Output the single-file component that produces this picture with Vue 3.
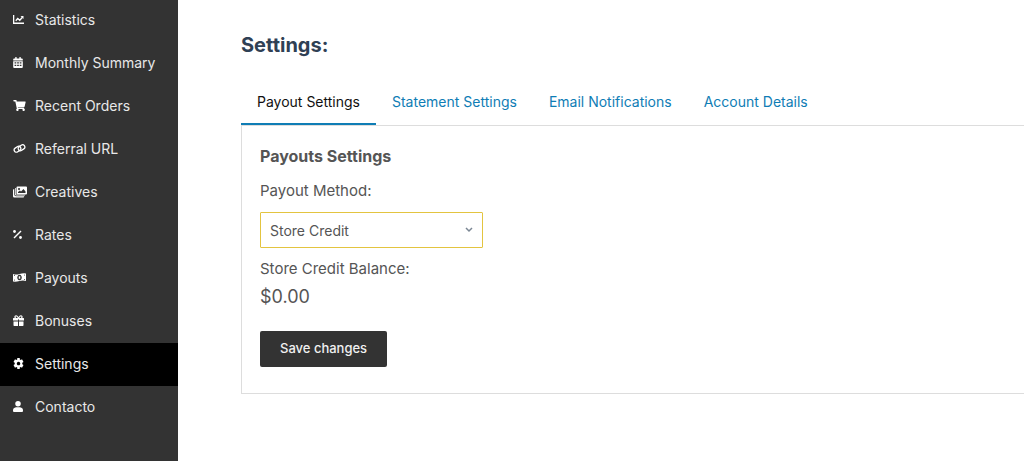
<script setup>
import { ref } from 'vue'

const menu = [
  { label: 'Statistics', icon: 'chart' },
  { label: 'Monthly Summary', icon: 'calendar' },
  { label: 'Recent Orders', icon: 'cart' },
  { label: 'Referral URL', icon: 'link' },
  { label: 'Creatives', icon: 'images' },
  { label: 'Rates', icon: 'percent' },
  { label: 'Payouts', icon: 'money' },
  { label: 'Bonuses', icon: 'gift' },
  { label: 'Settings', icon: 'cog' },
  { label: 'Contacto', icon: 'user' }
]
const tabs = ['Payout Settings', 'Statement Settings', 'Email Notifications', 'Account Details']
const method = ref('Store Credit')
</script>

<template>
  <div class="layout">
    <nav class="sidebar" aria-label="Affiliate area">
      <a v-for="item in menu" :key="item.label" href="#" class="item" :class="{ active: item.label === 'Settings' }">
        <svg v-if="item.icon === 'chart'" class="icon" viewBox="0 0 22 22" width="11" height="11"><path fill="none" stroke="currentColor" stroke-width="2.600" d="M1.300 2v16.500H22M5.500 13.500l4-4.500 4 3.500L19 6.500" /><path d="M15 4h6v6z" /></svg>
        <svg v-else-if="item.icon === 'calendar'" class="icon" viewBox="0 0 448 512" width="10" height="11"><path fill-rule="evenodd" d="M112 0h32q16 0 16 16v48h128V16q0-16 16-16h32q16 0 16 16v48h48q48 0 48 48v48H0v-48q0-48 48-48h48V16q0-16 16-16zM0 192h448v272q0 48-48 48H48q-48 0-48-48zM64 240v60h80v-60zM184 240v60h80v-60zM304 240v60h80v-60zM64 360v60h80v-60zM184 360v60h80v-60zM304 360v60h80v-60z" /></svg>
        <svg v-else-if="item.icon === 'cart'" class="icon" viewBox="0 0 576 512" width="13" height="11"><path d="M528 301l47-208c4-15-8-29-23-29H159l-9-45C148 8 138 0 126 0H24C11 0 0 11 0 24v16c0 13 11 24 24 24h70l70 343a56 56 0 1 0 67 9h210a56 56 0 1 0 64-10l5-25c4-15-8-29-23-29H218l-7-32h294c11 0 21-8 23-19z" /></svg>
        <svg v-else-if="item.icon === 'link'" class="icon" viewBox="0 0 26 22" width="13" height="11"><g fill="none" stroke="currentColor" stroke-width="2.600"><rect x="2" y="8" width="14" height="9" rx="4.500" transform="rotate(-35 9 12.500)" /><rect x="10" y="5" width="14" height="9" rx="4.500" transform="rotate(-35 17 9.500)" /></g></svg>
        <svg v-else-if="item.icon === 'images'" class="icon" viewBox="0 0 28 24" width="14" height="12"><path d="M2.500 6Q0 6 0 8.500v12Q0 23 2.500 23H20q2.500 0 2.500-2.500H6q-3.500 0-3.500-3.500z" /><path d="M4 4v12.500Q4 19 6.500 19H24v-1.500H8q-2.500 0-2.500-2.500V4z" /><path fill-rule="evenodd" d="M9 1h17q2 0 2 2v12q0 2-2 2H9q-2 0-2-2V3q0-2 2-2zM10 14h15v-3l-4-5-5 5-2-2-4 3zM12 4a2 2 0 1 0 .1 0z" /></svg>
        <svg v-else-if="item.icon === 'percent'" class="icon" viewBox="0 0 18 22" width="9" height="11"><circle cx="3" cy="5" r="2.800" /><circle cx="15" cy="17" r="2.800" /><path d="M15 3l2 2L3 19l-2-2z" /></svg>
        <svg v-else-if="item.icon === 'money'" class="icon" viewBox="0 0 26 22" width="13" height="11"><path fill-rule="evenodd" d="M0 4q6 2 13 0T26 3v15q-6-2-13 0T0 19zM13 5.500a4.500 5.500 0 1 0 .1 0z" /><rect x="11.500" y="8.500" width="3" height="5" /><g fill="#333"><circle cx="3" cy="7" r="1" /><circle cx="23" cy="15" r="1" /><circle cx="3" cy="16" r="1" /><circle cx="23" cy="6" r="1" /></g></svg>
        <svg v-else-if="item.icon === 'gift'" class="icon" viewBox="0 0 22 22" width="11" height="11"><path d="M1 6h20q1 0 1 1v4H12V6h-2v5H0V7q0-1 1-1zM1 13h9v9H2.500Q1 22 1 20.500zM12 13h9v7.500q0 1.500-1.500 1.500H12z" /><path fill="none" stroke="currentColor" stroke-width="2.200" d="M11 7C9 2 7 1 5 2S4 6 6 7h10c2-1 3-4 1-5s-4 0-6 5z" /></svg>
        <svg v-else-if="item.icon === 'cog'" class="icon" viewBox="0 0 22 22" width="11" height="11"><path fill-rule="evenodd" d="M8.500 0h5v3l2 1L18 2.500 21 8l-2.500 1.500v3L21 14l-3 5.500L15.500 18l-2 1v3h-5v-3l-2-1L4 19.500 1 14l2.500-1.500v-3L1 8l3-5.500L6.500 4l2-1zM11 7.500a3.500 3.500 0 1 0 .1 0z" /></svg>
        <svg v-else class="icon" viewBox="0 0 20 22" width="10" height="11"><circle cx="10" cy="5.500" r="5.500" /><path d="M6 12.500h8q6 1 6 6.500v1q0 2-2 2H2q-2 0-2-2v-1q0-5.500 6-6.500z" /></svg>
        <span>{{ item.label }}</span>
      </a>
    </nav>

    <main class="content">
      <h1>Settings:</h1>
      <div class="tabs">
        <a v-for="(tab, i) in tabs" :key="tab" href="#" class="tab" :class="{ selected: i === 0 }">{{ tab }}</a>
      </div>
      <form class="panel" @submit.prevent>
        <h2>Payouts Settings</h2>
        <label for="method">Payout Method:</label>
        <div class="picker">
          <select id="method" v-model="method">
            <option>Store Credit</option>
          </select>
          <svg class="arrow" viewBox="0 0 8 6" width="8" height="6"><path d="M1 1l3 3 3-3" fill="none" stroke="currentColor" stroke-width="1.500" /></svg>
        </div>
        <p class="caption">Store Credit Balance:</p>
        <p class="amount">$0.00</p>
        <button type="submit">Save changes</button>
      </form>
    </main>
  </div>
</template>

<style>
body {
  margin: 0;
  background: #fff;
}
</style>

<style scoped>
.layout {
  display: flex;
  min-height: 100vh;
  overflow: hidden;
  font-family: Inter, "Liberation Sans", sans-serif;
  color: #555;
}
.sidebar {
  flex: 0 0 178px;
  box-sizing: border-box;
  background: #333;
  margin-top: -1px;
}
.item {
  display: grid;
  grid-template-columns: 22px 1fr;
  align-items: center;
  box-sizing: border-box;
  height: 43px;
  padding: 0 0 2px 13px;
  color: #e8e8e8;
  font-size: 14px;
  text-decoration: none;
  white-space: nowrap;
}
.item.active {
  background: #000;
}
.icon {
  display: block;
  fill: currentColor;
  color: #fff;
}
.content {
  flex: 1;
  min-width: 0;
  padding: 32px 0 0 63px;
}
h1 {
  margin: 0;
  font-size: 20px;
  line-height: 26px;
  font-weight: 700;
  color: #2f4054;
}
.tabs {
  display: flex;
  margin-top: 22px;
}
.tab {
  padding: 12px 16px 11px;
  border-bottom: 2px solid transparent;
  font-size: 14px;
  line-height: 20px;
  color: #0f7db5;
  text-decoration: none;
  white-space: nowrap;
}
.tab.selected {
  color: #111;
  border-color: #0f7db5;
}
.panel {
  display: flex;
  flex-direction: column;
  align-items: flex-start;
  padding: 18px 18px 26px;
  border: 1px solid #ddd;
  border-right: 0;
}
h2 {
  margin: 0 0 11px;
  font-size: 16px;
  line-height: 24px;
  font-weight: 700;
}
label,
.caption {
  margin: 0;
  font-size: 15px;
  line-height: 24px;
}
.picker {
  position: relative;
  width: 223px;
  margin: 9px 0;
}
select {
  display: block;
  appearance: none;
  width: 100%;
  height: 36px;
  padding: 0 28px 0 9px;
  border: 1px solid #e3c440;
  border-radius: 1px;
  background: #fff;
  color: #555;
  font: inherit;
  font-size: 14px;
}
.arrow {
  position: absolute;
  right: 10px;
  top: 15px;
  color: #7b8794;
  pointer-events: none;
}
.amount {
  margin: 3px 0 21px;
  font-size: 18px;
  line-height: 26px;
}
button {
  height: 36px;
  padding: 0 20px 2px;
  border: 0;
  border-radius: 2px;
  background: #333;
  color: #f0f0f0;
  font: inherit;
  font-size: 13px;
  font-weight: 500;
}
</style>
